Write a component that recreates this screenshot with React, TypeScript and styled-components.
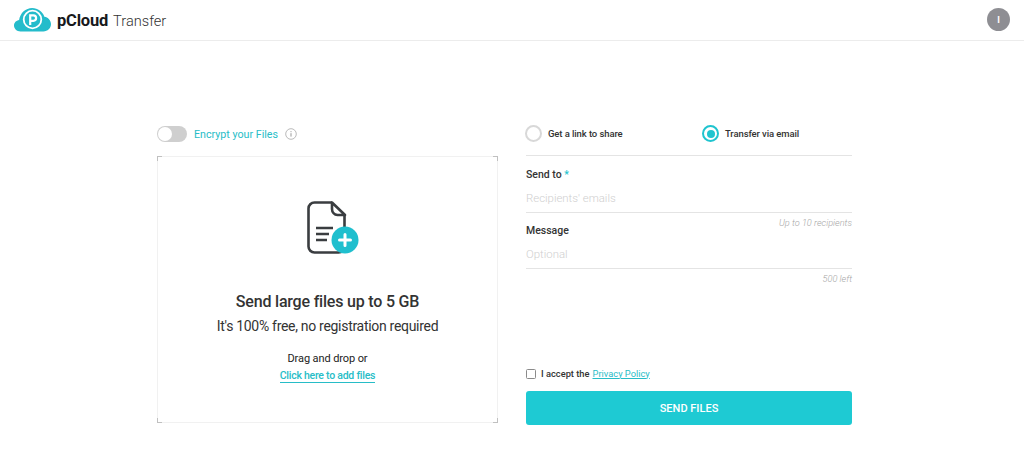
import React from "react";
import styled, { createGlobalStyle } from "styled-components";

const Global = createGlobalStyle`
  html, body { margin: 0; padding: 0; background: #fff; }
  body { font-family: Roboto, "Liberation Sans", sans-serif; color: #333; }
`;
const Page = styled.div`width: 1024px; height: 464px; overflow: hidden; background: #fff;`;
const Header = styled.header`
  height: 40px; border-bottom: 1px solid #ececec; display: flex; align-items: center;
  justify-content: space-between; padding: 0 14px;
`;
const Brand = styled.div`display: flex; align-items: center; gap: 6px;`;
const BrandText = styled.div`display: flex; align-items: baseline; gap: 5px; color: #17191c;`;
const BrandStrong = styled.span`font-size: 16.5px; font-weight: 700; letter-spacing: -0.2px;`;
const BrandLight = styled.span`font-size: 14.6px; font-weight: 300; color: #333;`;
const Avatar = styled.div`
  width: 23px; height: 23px; border-radius: 50%; background: #8e8e93; color: #fff; font-size: 9px; font-weight: 700;
  display: flex; align-items: center; justify-content: center; margin-top: -1px;
`;
const Main = styled.main`display: flex; gap: 28px; padding: 85px 0 0 157px;`;
const Left = styled.section`width: 341px; display: flex; flex-direction: column;`;
const EncryptRow = styled.div`height: 16px; display: flex; align-items: center; margin-bottom: 14px;`;
const Toggle = styled.div`
  width: 30px; height: 16px; border-radius: 8px; background: #cfcfcf; position: relative; flex: none; margin-right: 7px;
  &::after { content: ""; position: absolute; left: 1px; top: 1px; width: 14px; height: 14px; border-radius: 50%; background: #fff; }
`;
const EncryptLabel = styled.span`font-size: 10.7px; color: #27bdc7; margin-right: 7px;`;
const Drop = styled.div`
  position: relative; height: 267px; box-sizing: border-box; border: 1px solid #f1f1f1;
  display: flex; flex-direction: column; align-items: center; padding-top: 44px;
`;
const Corner = styled.i<{ $v: "top" | "bottom"; $h: "left" | "right" }>`
  position: absolute; width: 4px; height: 4px;
  ${(p) => p.$v}: -1px; ${(p) => p.$h}: -1px;
  border-${(p) => p.$v}: 1px solid #c0c0c0; border-${(p) => p.$h}: 1px solid #c0c0c0;
`;
const IconWrap = styled.div`height: 54px; margin-left: 10px;`;
const Heading = styled.h2`margin: 37px 0 0; font-size: 16px; line-height: 20px; font-weight: 500; color: #333; letter-spacing: -0.2px;`;
const Sub = styled.p`margin: 5px 0 0; font-size: 14px; line-height: 18px; color: #333; letter-spacing: -0.3px;`;
const Drag = styled.p`margin: 17px 0 0; font-size: 11px; line-height: 14px; color: #222; letter-spacing: -0.1px;`;
const AddLink = styled.a`
  margin-top: 3px; font-size: 10.5px; line-height: 13px; font-weight: 500; color: #27bdc7; border-bottom: 1px solid #27bdc7; letter-spacing: -0.25px;
`;
const Right = styled.section`width: 326px; display: flex; flex-direction: column; height: 299px;`;
const Tabs = styled.div`
  display: flex; height: 30px; border-bottom: 1px solid #e4e4e4; margin-bottom: 13px; margin-top: -1px;
`;
const Tab = styled.label<{ $w: number }>`
  width: ${(p) => p.$w}px; display: flex; align-items: flex-start; gap: 6px; font-size: 9.5px; font-weight: 500; color: #333; line-height: 18px; letter-spacing: -0.1px;
`;
const Radio = styled.span<{ $on?: boolean }>`
  width: 17px; height: 17px; border-radius: 50%; box-sizing: border-box; flex: none; background: #fff; margin-left: -1px;
  border: ${(p) => (p.$on ? "2.5px solid #1fc4cf" : "2px solid #d8d8d8")};
  display: flex; align-items: center; justify-content: center;
  &::after { content: ""; width: 8px; height: 8px; border-radius: 50%; background: ${(p) => (p.$on ? "#1fc4cf" : "transparent")}; }
`;
const FieldLabel = styled.div`font-size: 10.5px; font-weight: 500; line-height: 12px; color: #333;`;
const Req = styled.span`color: #1fc4cf;`;
const Input = styled.div`
  height: 26px; margin-top: 5px; border-bottom: 1px solid #e4e4e4; font-size: 11.4px; line-height: 24px; color: #cfcfcf; font-weight: 300;
`;
const Hint = styled.div`font-size: 9.2px; line-height: 12px; font-style: italic; font-weight: 300; color: #a6a6a6; text-align: right; margin-top: 4px;`;
const MessageLabel = styled(FieldLabel)`margin-top: -4px;`;
const Accept = styled.div`margin-top: auto; display: flex; align-items: center; font-size: 9.3px; font-weight: 500; color: #333; height: 14px; margin-bottom: 11px;`;
const Check = styled.span`width: 8px; height: 8px; border: 1px solid #8b8b8b; border-radius: 1.5px; margin-right: 5px; flex: none; margin-top: 1px;`;
const Policy = styled.a`color: #27bdc7; text-decoration: underline; margin-left: 3px; font-weight: 400;`;
const Send = styled.button`
  height: 34px; border: 0; border-radius: 3px; background: #1ecad3; color: #fff; font: 500 11px Roboto, sans-serif; padding: 0;
`;

const Logo = () => (
  <svg width="37" height="24" viewBox="0 0 37 24">
    <path fill="#24bccb" d="M6.5 23.5C2.8 23.5 0 21 0 17.6c0-3 2.2-5.3 5.1-5.7C6.2 5 11.7 0 18.2 0c5.6 0 10.4 3.6 12.2 8.7 3.6.6 6.6 3.6 6.6 7.4 0 4.2-3.4 7.4-7.6 7.4z" />
    <circle cx="18.5" cy="11.5" r="8.8" fill="none" stroke="#fff" strokeWidth="1.8" />
    <path fill="none" stroke="#fff" strokeWidth="2.2" d="M16.2 17v-9.6h3.2a2.6 2.6 0 0 1 0 5.4h-3.2" />
  </svg>
);
const Info = () => (
  <svg width="12" height="12" viewBox="0 0 12 12">
    <circle cx="6" cy="6" r="5.3" fill="none" stroke="#a8a8a8" strokeWidth="0.8" />
    <path d="M6 5.2v3.4M6 3.2v1" stroke="#999" strokeWidth="1" />
  </svg>
);
const FileIcon = () => (
  <svg width="54" height="54" viewBox="0 0 54 54">
    <path fill="none" stroke="#3a3d40" strokeWidth="2.6" strokeLinejoin="round" d="M26 1.5H8.5a6 6 0 0 0-6 6v38a6 6 0 0 0 6 6h24a6 6 0 0 0 6-6V14" />
    <path fill="none" stroke="#3a3d40" strokeWidth="2.6" strokeLinejoin="round" strokeLinecap="round" d="M26 1.5 39 14h-7.5A6 6 0 0 1 26 8z" />
    <path stroke="#3a3d40" strokeWidth="2.6" d="M10 27h17M10 33h13M10 39h11" />
    <circle cx="39" cy="39" r="13.5" fill="#1fbfce" />
    <path stroke="#fff" strokeWidth="3" strokeLinecap="round" d="M39 33.5v11M33.5 39h11" />
  </svg>
);

export default function App() {
  return (
    <Page>
      <Global />
      <Header>
        <Brand>
          <Logo />
          <BrandText>
            <BrandStrong>pCloud</BrandStrong>
            <BrandLight>Transfer</BrandLight>
          </BrandText>
        </Brand>
        <Avatar>I</Avatar>
      </Header>
      <Main>
        <Left>
          <EncryptRow>
            <Toggle />
            <EncryptLabel>Encrypt your Files</EncryptLabel>
            <Info />
          </EncryptRow>
          <Drop>
            <Corner $v="top" $h="left" />
            <Corner $v="top" $h="right" />
            <Corner $v="bottom" $h="left" />
            <Corner $v="bottom" $h="right" />
            <IconWrap><FileIcon /></IconWrap>
            <Heading>Send large files up to 5 GB</Heading>
            <Sub>It's 100% free, no registration required</Sub>
            <Drag>Drag and drop or</Drag>
            <AddLink>Click here to add files</AddLink>
          </Drop>
        </Left>
        <Right>
          <Tabs>
            <Tab $w={177}><Radio />Get a link to share</Tab>
            <Tab $w={149}><Radio $on />Transfer via email</Tab>
          </Tabs>
          <FieldLabel>Send to <Req>*</Req></FieldLabel>
          <Input>Recipients' emails</Input>
          <Hint>Up to 10 recipients</Hint>
          <MessageLabel>Message</MessageLabel>
          <Input>Optional</Input>
          <Hint>500 left</Hint>
          <Accept>
            <Check />I accept the <Policy>Privacy Policy</Policy>
          </Accept>
          <Send>SEND FILES</Send>
        </Right>
      </Main>
    </Page>
  );
}
